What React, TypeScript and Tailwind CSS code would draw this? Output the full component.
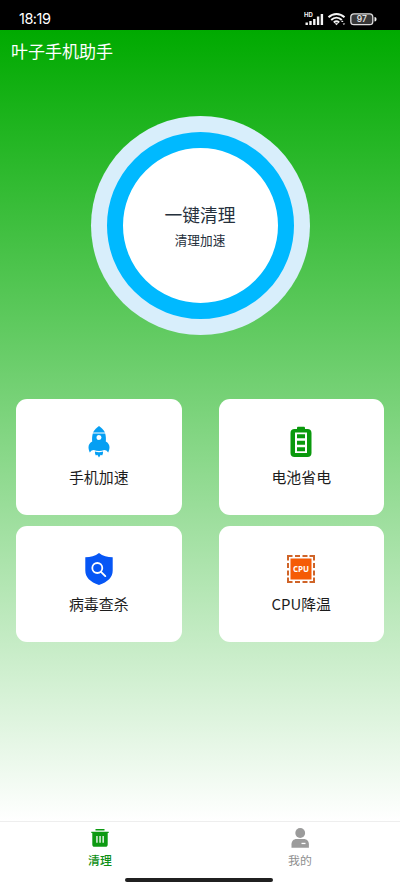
import { FC, ReactNode } from "react"

interface FeatureCardProps {
  icon: ReactNode
  label: string
}

const RocketIcon = () => (
  <svg className="h-8 w-8" viewBox="0 0 32 32" fill="#069ff3">
    <path d="M16 0c2.600 1.800 4.800 3.900 6 6.500H10C11.200 3.900 13.400 1.800 16 0Z" />
    <path
      fillRule="evenodd"
      d="M9.800 7.400h12.400c.7 2.600.9 5.600.6 8.200 2.400 1.300 3.700 3.300 3.700 5.600 0 1.700-.6 3.600-1.300 5.400-1.200-1.700-2.300-2.500-4-2.500-3 1.300-7.400 1.300-10.400 0-1.700 0-2.800.8-4 2.500-.7-1.800-1.300-3.700-1.300-5.400 0-2.300 1.300-4.300 3.700-5.600-.3-2.600-.1-5.600.6-8.200ZM16 9a2.500 2.500 0 1 0 0 5 2.500 2.500 0 0 0 0-5Z"
    />
    <path d="M12 25.600c2.700.8 5.300.8 8 0 .2 1.500-.1 2.700-.9 3.900l-1.400-.8-1.700 2.800-1.700-2.800-1.400.8c-.8-1.200-1.100-2.400-.9-3.900Z" />
  </svg>
)

const BatteryIcon = () => (
  <svg className="h-8 w-8" viewBox="0 0 32 32">
    <path
      fill="#0a990d"
      d="M12 3V2.200C12 1.300 12.500.8 13.400.8h5.200c.9 0 1.400.5 1.400 1.400V3h2.500C25 3 26.500 4.500 26.500 7v20c0 2.500-1.500 4-4 4h-13c-2.500 0-4-1.500-4-4V7c0-2.500 1.500-4 4-4H12Z"
    />
    <path fill="#fff" d="M10 6.500h12v20.500H10z" />
    <path fill="#0a990d" d="M12 8.300h8v3.900h-8zM12 14.800h8v3.900h-8zM12 21.300h8v3.900h-8z" />
  </svg>
)

const ShieldIcon = () => (
  <svg className="h-8 w-8" viewBox="0 0 32 32" fill="none">
    <path
      fill="#0656f5"
      d="M16 0c3.800 2.900 8.400 4.200 13.700 4.300v13.200c0 6.700-4.800 11.500-13.700 14.500C7.100 29 2.300 24.200 2.300 17.500V4.300C7.600 4.200 12.200 2.900 16 0Z"
    />
    <circle cx="14.300" cy="15" r="5" stroke="#fff" strokeWidth="1.800" />
    <path d="m18 18.800 4.300 4.300" stroke="#fff" strokeWidth="1.900" strokeLinecap="round" />
  </svg>
)

const CpuIcon = () => (
  <svg className="h-8 w-8" viewBox="0 0 32 32">
    <g fill="none" stroke="#cf6428" strokeWidth="2">
      <path d="M3 7.500V3h4.500M24.500 3H29v4.500M29 24.500V29h-4.500M7.500 29H3v-4.500" />
      <path d="M10 3h5M17.500 3h5M10 29h5M17.500 29h5M3 10v5M3 17.500v5M29 10v5M29 17.500v5" />
    </g>
    <rect x="5.500" y="5.500" width="21" height="21" fill="#f55b06" />
    <text
      x="16"
      y="18.600"
      textAnchor="middle"
      textLength="16"
      fill="#fff"
      className="font-['Open_Sans',sans-serif] text-[8px] font-bold"
    >
      CPU
    </text>
  </svg>
)

const FeatureCard: FC<FeatureCardProps> = ({ icon, label }) => {
  return (
    <button className="flex h-[116px] flex-col items-center rounded-[11px] bg-white pt-[27px]">
      {icon}
      <span className="mt-[7px] text-[14.900px] leading-6 text-[#1c1c1c]">{label}</span>
    </button>
  )
}

const features = [
  { label: "手机加速", icon: <RocketIcon /> },
  { label: "电池省电", icon: <BatteryIcon /> },
  { label: "病毒查杀", icon: <ShieldIcon /> },
  { label: "CPU降温", icon: <CpuIcon /> },
]

const StatusBar = () => (
  <div className="flex h-[30px] items-start justify-between bg-black pr-[23px] pl-[19px] text-white">
    <span className="mt-[9px] font-['Inter',sans-serif] text-[14.500px] leading-5 tracking-[-0.5px]">18:19</span>
    <svg className="mt-[10px] h-4 w-[73px]" viewBox="0 0 73 16" fill="#f4f4f4">
      <text x="0" y="7" className="font-['Inter',sans-serif] text-[6px] font-bold">HD</text>
      <path d="M1.500 12.500h2.400V15H1.500zM5.300 11h2.400v4H5.300zM9.100 9h2.400v6H9.100zM12.900 6.500h2.400V15h-2.400zM16.700 4h2.400v11h-2.400z" />
      <g fill="none" stroke="#f4f4f4" strokeWidth="2">
        <path d="M24.500 7.200c4.600-4.400 11.400-4.400 16 0" />
        <path d="M27.200 10c3.200-3 7.400-3 10.600 0" />
        <path d="M29.800 12.500c1.800-1.600 3.600-1.600 5.400 0" />
      </g>
      <path d="M30.600 13.300h3.800L32.500 15.300zM37 12l1.300-1.600 1.300 1.600zM38.600 13.500h2.600L39.900 15z" />
      <rect x="46.800" y="3.800" width="22" height="10.800" rx="3.200" fill="#383838" stroke="#ddd" strokeWidth="1.300" />
      <path d="M70.500 7c1.600.2 2 1 2 2.200s-.4 2-2 2.200z" />
      <text x="57.800" y="12.300" textAnchor="middle" className="font-['Inter',sans-serif] text-[8.500px] font-medium">97</text>
    </svg>
  </div>
)

const TrashIcon = () => (
  <svg className="h-5 w-5" viewBox="0 0 20 20">
    <path fill="#0d9a12" d="M5.500 1h9v1.400h-9zM1.300 3.700h17.400V5H1.300zM2.300 5h15.400v11.500c0 1.500-.8 2.300-2.300 2.300H4.600c-1.500 0-2.300-.8-2.300-2.300z" />
    <path fill="#fff" d="M6.300 8h1.300v6.700H6.300zM9.400 8h1.300v6.700H9.400zM12.500 8h1.300v6.700h-1.300z" />
  </svg>
)

const UserIcon = () => (
  <svg className="h-5 w-5" viewBox="0 0 20 20" fill="#9b9b9b">
    <circle cx="10.200" cy="5" r="4.900" />
    <path d="M1.500 19.800v-3.500c0-3.300 2-5.400 5.200-5.400h7c3.200 0 5.200 2.100 5.200 5.400v3.500z" />
    <path fill="#fff" d="M11.500 14.800h4v1.300h-4z" />
  </svg>
)

const TabBar = () => (
  <nav className="border-t border-[#eeeeee] bg-white">
    <div className="grid h-[55px] grid-cols-2 pt-[6px] text-[11.900px] leading-4">
      <div className="flex flex-col items-center gap-1 font-medium text-[#0d8f16]">
        <TrashIcon />
        <span>清理</span>
      </div>
      <div className="flex flex-col items-center gap-1 text-[#8f8f8f]">
        <UserIcon />
        <span>我的</span>
      </div>
    </div>
    <div className="ml-[125px] mt-[1px] mb-[6px] h-1 w-[148px] rounded-full bg-[#202020]" />
  </nav>
)

const App: FC = () => {
  return (
    <div className="flex h-[888px] w-[400px] flex-col overflow-hidden bg-white font-['Noto_Sans_CJK_SC',sans-serif]">
      <StatusBar />
      <main className="flex flex-1 flex-col bg-linear-to-b/srgb from-[#00aa00] to-white">
        <h1 className="px-[11px] pt-[7px] text-[17px] leading-7 text-white">叶子手机助手</h1>

        <div className="mx-auto mt-[51px] flex h-[219px] w-[219px] rounded-full bg-[#d8eefb] p-4">
          <button className="flex flex-1 flex-col items-center justify-center rounded-full border-16 border-[#00b9ff] bg-white text-[#25303c]">
            <span className="text-[17.800px] leading-7">一键清理</span>
            <span className="text-[12.700px] leading-6">清理加速</span>
          </button>
        </div>

        <section className="mt-16 grid grid-cols-2 gap-x-[37px] gap-y-[11px] px-4">
          {features.map((feature) => (
            <FeatureCard key={feature.label} icon={feature.icon} label={feature.label} />
          ))}
        </section>
      </main>
      <TabBar />
    </div>
  )
}

export default App
